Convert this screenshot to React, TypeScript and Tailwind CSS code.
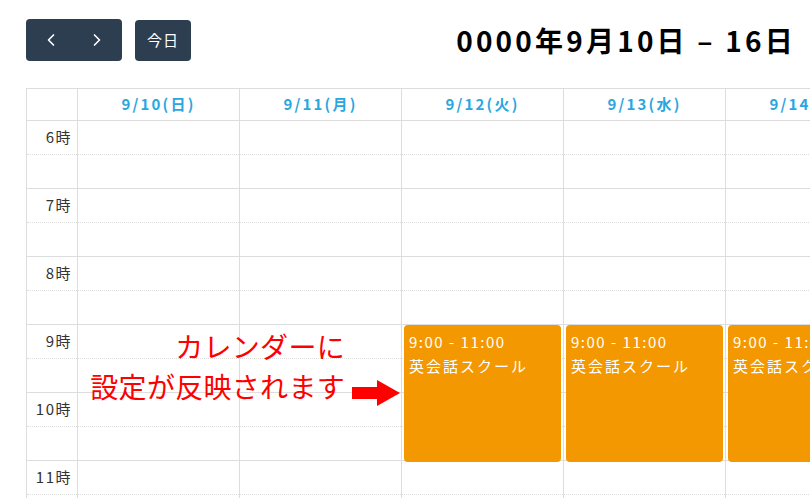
import { ChevronLeft, ChevronRight } from 'lucide-react';

const days = ['9/10(日)', '9/11(月)', '9/12(火)', '9/13(水)', '9/14(木)', '9/15(金)', '9/16(土)'];
const hours = [6, 7, 8, 9, 10, 11];
const eventDays = [2, 3, 4];

function DayColumn({ index }: { index: number }) {
  return (
    <div className="relative w-[162px] shrink-0 border-r border-[#dddddd]">
      {hours.map((h) => (
        <div key={h}>
          <div className="h-[34px] border-b border-dotted border-[#dddddd]" />
          <div className="h-[34px] border-b border-[#dddddd]" />
        </div>
      ))}
      {eventDays.includes(index) && (
        <div className="absolute left-[2px] top-[204px] h-[137px] w-[157px] rounded-[4px] bg-[#f39800] px-[5px] pt-[5px] text-[15px] leading-[24px] tracking-[1.5px] text-white">
          <div className="whitespace-nowrap">9:00 - 11:00</div>
          <div className="whitespace-nowrap tracking-[2px]">英会話スクール</div>
        </div>
      )}
    </div>
  );
}

export default function App() {
  return (
    <div
      className="relative h-[498px] w-[810px] overflow-hidden bg-white"
      style={{ fontFamily: '"Noto Sans CJK JP", "Noto Sans", sans-serif' }}
    >
      <div className="flex items-center justify-between pl-[26px] pr-[14px] pt-[18px]">
        <div className="flex items-center gap-[13px]">
          <div className="flex h-[42px] w-[96px] items-center justify-between rounded-[4px] bg-[#2c3e50] px-[15px] text-white">
            <ChevronLeft className="h-5 w-5" strokeWidth={2} />
            <ChevronRight className="h-5 w-5" strokeWidth={2} />
          </div>
          <div className="flex h-[41px] w-[56px] items-center justify-center rounded-[4px] bg-[#2c3e50] text-[15px] tracking-[1px] text-white">
            今日
          </div>
        </div>
        <div className="whitespace-nowrap text-[28px] font-bold leading-[44px] tracking-[3.2px] text-black">
          0000年9月10日 – 16日
        </div>
      </div>

      <div className="ml-[26px] mt-[26px] w-[1185px] border-l border-t border-[#dddddd]">
        <div className="flex h-[32px] border-b border-[#dddddd]">
          <div className="w-[51px] shrink-0 border-r border-[#dddddd]" />
          {days.map((d) => (
            <div
              key={d}
              className="flex w-[162px] shrink-0 items-center justify-center whitespace-nowrap border-r border-[#dddddd] text-[15px] font-bold tracking-[2.2px] text-[#2aa6e0]"
            >
              {d}
            </div>
          ))}
        </div>
        <div className="flex">
          <div className="w-[51px] shrink-0 border-r border-[#dddddd]">
            {hours.map((h) => (
              <div key={h}>
                <div className="h-[34px] border-b border-dotted border-[#dddddd] pr-[5px] pt-[5px] text-right text-[15px] leading-[22px] tracking-[1.5px] text-[#333333]">
                  {h}時
                </div>
                <div className="h-[34px] border-b border-[#dddddd]" />
              </div>
            ))}
          </div>
          {days.map((d, i) => (
            <DayColumn key={d} index={i} />
          ))}
        </div>
      </div>

      <div className="absolute right-[465px] top-[326px] flex flex-col items-end whitespace-nowrap text-[28px] leading-[40px] tracking-[0.3px] text-[#ff0000]">
        <div>カレンダーに</div>
        <div>設定が反映されます</div>
      </div>
      <svg width="48" height="26" viewBox="0 0 48 26" className="absolute left-[352px] top-[380px]">
        <polygon points="0,7 25,7 25,0 48,13 25,26 25,19 0,19" fill="#ff0000" />
      </svg>
    </div>
  );
}
